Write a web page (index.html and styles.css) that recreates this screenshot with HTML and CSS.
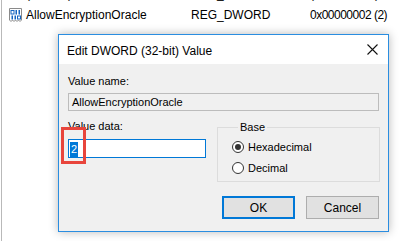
FILE: index.html
```html
<!DOCTYPE html>
<html lang="en">
<head>
    <meta charset="UTF-8">
    <title>Edit DWORD (32-bit) Value</title>
    <link rel="stylesheet" href="styles.css">
</head>
<body>
    <!-- Registry list behind the dialog -->
    <div class="reg-list">
        <div class="reg-row">
            <span class="reg-icon"></span>
            <span class="reg-name">(Default)</span>
            <span class="reg-type">REG_SZ</span>
            <span class="reg-data">(value not set)</span>
        </div>
        <div class="reg-row">
            <svg class="reg-icon" width="15" height="14" viewBox="0 0 15 14">
                <path d="M1.5 0.5h12v11.5l-1.5 1.5l-1.5-1.5l-1.5 1.5l-1.5-1.5l-1.5 1.5l-1.5-1.5l-1.5 1.5l-1.5-1.5z" fill="#fff" stroke="#8a8a8a"/>
                <rect x="3" y="2.5" width="3" height="3.5" fill="none" stroke="#1565c0"/>
                <rect x="7.5" y="2" width="1.5" height="4.5" fill="#1565c0"/>
                <rect x="10.5" y="2" width="1.5" height="4.5" fill="#1565c0"/>
                <rect x="3.5" y="7.5" width="1.5" height="4" fill="#1565c0"/>
                <rect x="6.5" y="7.5" width="1.5" height="4" fill="#1565c0"/>
                <rect x="9.5" y="8" width="3" height="3" fill="none" stroke="#1565c0"/>
            </svg>
            <span class="reg-name">AllowEncryptionOracle</span>
            <span class="reg-type">REG_DWORD</span>
            <span class="reg-data">0x00000002 (2)</span>
        </div>
    </div>

    <!-- Edit dialog -->
    <div class="dialog">
        <div class="title-bar">
            <span class="title">Edit DWORD (32-bit) Value</span>
            <svg class="close" width="11" height="11" viewBox="0 0 11 11">
                <path d="M0.5 0.5L10.5 10.5M10.5 0.5L0.5 10.5" stroke="#111" stroke-width="1.1"/>
            </svg>
        </div>
        <div class="dialog-body">
            <div class="label">Value name:</div>
            <div class="field readonly">AllowEncryptionOracle</div>

            <div class="lower">
                <div class="data-col">
                    <div class="label">Value data:</div>
                    <div class="field focused"><span class="sel">2</span></div>
                </div>
                <fieldset class="base">
                    <legend>Base</legend>
                    <div class="radio-row"><span class="radio checked"></span>Hexadecimal</div>
                    <div class="radio-row"><span class="radio"></span>Decimal</div>
                </fieldset>
            </div>

            <div class="buttons">
                <button class="btn default">OK</button>
                <button class="btn">Cancel</button>
            </div>
        </div>
    </div>

    <!-- Annotation -->
    <div class="highlight-box"></div>
</body>
</html>
```

FILE: styles.css
```css
* { box-sizing: border-box; margin: 0; padding: 0; }
body { font-family: 'Liberation Sans', Arial, sans-serif; background: #fff; color: #000; width: 411px; height: 241px; overflow: hidden; position: relative; }

.reg-list { margin-left: 1px; border-left: 1px solid #b9b9b9; height: 260px; margin-top: -15px; }
.reg-row { display: flex; align-items: center; height: 17px; margin-bottom: 4px; font-size: 12px; padding-top: 1px; }
.reg-icon { width: 15px; height: 14px; margin-left: 6px; margin-right: 3px; flex-shrink: 0; }
.reg-name { width: 165px; }
.reg-type { width: 119px; }
.reg-data { letter-spacing: -0.5px; white-space: nowrap; }

.dialog { position: absolute; left: 58px; top: 34px; width: 331px; height: 198px; background: #f0f0f0; border: 1px solid #2a8de0; box-shadow: 0 0 9px rgba(0, 0, 0, 0.28); }
.title-bar { height: 29px; background: #fff; display: flex; align-items: center; justify-content: space-between; padding: 2px 10px 0 8px; font-size: 12px; }
.close { margin-bottom: 2px; }

.dialog-body { padding: 11px 9px 0 9px; font-size: 11px; }
.label { line-height: 13px; height: 13px; }
.field { height: 18px; margin-top: 5px; border: 1px solid #bcbcbc; line-height: 16px; padding-left: 3px; }
.field.readonly { background: #f0f0f0; }
.field.focused { background: #fff; border-color: #0078d7; height: 19px; margin-top: 6px; padding-left: 1px; padding-top: 1px; }
.sel { display: inline-block; background: #0078d7; color: #fff; padding: 0 1px; line-height: 15px; }

.lower { display: flex; margin-top: 9px; }
.data-col { width: 138px; }
.base { width: 163px; height: 61px; margin-left: 11px; margin-right: -1px; margin-top: 1px; border: 1px solid #dcdcdc; padding: 2px 0 0 14px; }
.base legend { margin-left: 6px; padding: 0 2px; line-height: 13px; }
.radio-row { display: flex; align-items: center; height: 21px; }
.radio { width: 12px; height: 12px; border: 1px solid #333; border-radius: 50%; background: #fff; margin-right: 4px; position: relative; }
.radio.checked::after { content: ''; position: absolute; left: 2px; top: 2px; width: 6px; height: 6px; border-radius: 50%; background: #333; }

.buttons { display: flex; justify-content: flex-end; gap: 11px; margin-top: 14px; }
.btn { width: 73px; height: 23px; background: #e1e1e1; border: 1px solid #adadad; font-family: 'Liberation Sans', Arial, sans-serif; font-size: 12px; color: #000; }
.btn.default { border: 2px solid #0078d7; }

.highlight-box { position: absolute; left: 61px; top: 127px; width: 25px; height: 37px; border: 3px solid #e8453c; }
```
